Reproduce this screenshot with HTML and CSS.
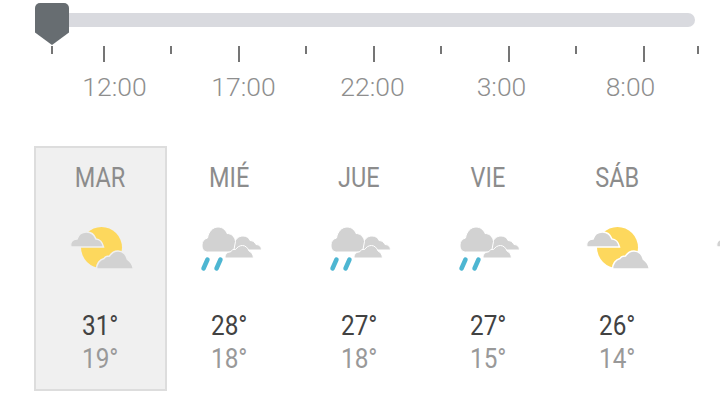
FILE: index.html
```html
<!DOCTYPE html>
<html lang="es">
<head>
  <meta charset="UTF-8">
  <title>Pronóstico</title>
  <link rel="stylesheet" href="styles.css">
</head>
<body>

  <svg class="defs" width="0" height="0">
    <symbol id="sun-cloud" viewBox="0 0 64 40">
      <circle cx="31" cy="18" r="20.5" fill="#fdd85d"/>
      <path class="gap" d="M.5 17.500C-1 13 2 9.500 6.500 9.500 8 4.500 12 2.500 16 2.500c4.500 0 8 3 9.500 7 3.500 0 6.500 3.500 7.500 8z"/>
      <path class="gap" d="M26 39.500c0-5 3-9.500 7.500-10.500 1-2 3.500-2.500 5.500-2.500 2-3 5-5 8.500-5 5 0 8.500 4 9.500 8.500 3 2 5 5 6 9.500z"/>
    </symbol>
    <symbol id="rain-cloud" viewBox="0 0 64 45">
      <path class="part" d="M33 23l2-7c1-4 4-7 8.500-7 3 0 6 1.500 7 4.500 3 0 5 2 6 4 3 0 5.500 2 5.500 5.500z"/>
      <path class="part" d="M8 25c-4 0-5.500-3.500-5.500-7 0-4 2.500-6 5.500-7C9 5 13 0 18.500 0c5 0 8 3.500 9 6.500 4.500 0 8 3.500 8.500 8L34 25z"/>
      <path class="part" d="M25.500 31c0-4 2-6 5.500-6 1-2 3-3 5-2.500 2-2.500 4-4 7-4 3 0 5.500 2.500 6.500 5.500 2.500 1 4 3.500 4.500 7z"/>
      <path class="drop" d="M8 32.500 4 41.500M21 32.500l-4 9"/>
    </symbol>
  </svg>

  <div class="slider">
    <div class="thumb"></div>
    <div class="track"></div>
  </div>

  <div class="ticks">
    <i></i><i class="major"></i><i></i><i class="major"></i><i></i><i class="major"></i><i></i><i class="major"></i><i></i><i class="major"></i><i></i>
  </div>

  <div class="hours">
    <span>12:00</span>
    <span>17:00</span>
    <span>22:00</span>
    <span>3:00</span>
    <span>8:00</span>
  </div>

  <div class="days">
    <div class="day selected">
      <div class="name"><span>MAR</span></div>
      <svg class="icon"><use href="#sun-cloud"/></svg>
      <div class="high"><span>31°</span></div>
      <div class="low"><span>19°</span></div>
    </div>
    <div class="day">
      <div class="name"><span>MIÉ</span></div>
      <svg class="icon"><use href="#rain-cloud"/></svg>
      <div class="high"><span>28°</span></div>
      <div class="low"><span>18°</span></div>
    </div>
    <div class="day">
      <div class="name"><span>JUE</span></div>
      <svg class="icon"><use href="#rain-cloud"/></svg>
      <div class="high"><span>27°</span></div>
      <div class="low"><span>18°</span></div>
    </div>
    <div class="day">
      <div class="name"><span>VIE</span></div>
      <svg class="icon"><use href="#rain-cloud"/></svg>
      <div class="high"><span>27°</span></div>
      <div class="low"><span>15°</span></div>
    </div>
    <div class="day">
      <div class="name"><span>SÁB</span></div>
      <svg class="icon"><use href="#sun-cloud"/></svg>
      <div class="high"><span>26°</span></div>
      <div class="low"><span>14°</span></div>
    </div>
    <div class="day">
      <svg class="icon next"><use href="#sun-cloud"/></svg>
    </div>
  </div>

</body>
</html>
```

FILE: styles.css
```css
* {
  margin: 0;
  padding: 0;
  box-sizing: border-box;
}

html, body {
  height: 405px;
  overflow: hidden;
}

body {
  font-family: Roboto, sans-serif;
  background: #fff;
}

.defs {
  display: block;
  height: 0;
}

/* Slider */
.slider {
  display: flex;
  align-items: flex-start;
  height: 46px;
  padding: 3px 25px 0 35px;
}

.thumb {
  flex: none;
  width: 34px;
  height: 42px;
  background: #676d71;
  border-radius: 5px 5px 0 0;
  clip-path: polygon(0 0, 100% 0, 100% 70%, 50% 100%, 0 70%);
}

.track {
  flex: 1;
  height: 14px;
  margin-top: 10px;
  background: #d9dadf;
  border-radius: 0 7px 7px 0;
}

.ticks {
  display: flex;
  gap: 65.5px;
  height: 16px;
  padding-left: 51px;
}

.ticks i {
  flex: none;
  width: 2px;
  height: 8px;
  background: #757575;
}

.ticks i:first-child {
  margin-right: -16px;
}

/* the first and last steps are shorter than the others */
.ticks i:last-child {
  margin-left: -13.5px;
}

.ticks i.major {
  height: 16px;
}

.hours {
  display: flex;
  padding-left: 50px;
  margin-top: 10px;
  height: 30px;
  line-height: 30px;
  font-size: 26.5px;
  font-weight: 300;
  color: #8e8e8e;
}

.hours span {
  flex: none;
  width: 129px;
  text-align: center;
}

/* Daily forecast */
.days {
  display: flex;
  align-items: flex-start;
  margin-top: 44px;
  padding-left: 34px;
  overflow: hidden;
}

.day {
  --bg: #fff;
  flex: none;
  width: 129.25px;
  height: 245px;
  padding-top: 14px;
  text-align: center;
  border: 2px solid transparent;
}

.day.selected {
  --bg: #f0f0f0;
  width: 133px;
  margin-right: -2px;
  background: var(--bg);
  border-color: #ddd;
}

.name, .high, .low {
  font-size: 27px;
}

.name span, .high span, .low span {
  display: inline-block;
  transform: scaleX(.87);
}

.high span, .low span {
  transform: scaleX(.9);
}

.name {
  height: 32px;
  line-height: 32px;
  color: #8c8c8c;
}

.icon {
  display: block;
  width: 64px;
  height: 45px;
  margin: 33px auto 0;
  transform: translateX(1.5px);
}

.icon.next {
  margin-top: 65px;
}

.high {
  margin-top: 38px;
  height: 33px;
  line-height: 33px;
  color: #424242;
}

.low {
  height: 33px;
  line-height: 33px;
  color: #999;
}

/* Icon parts, the cloud outline takes the colour of the cell behind it */
.gap {
  fill: #d2d2d2;
  stroke: var(--bg);
  stroke-width: 1.5;
}

.part {
  fill: #d2d2d2;
  stroke: #fff;
  stroke-width: 1;
}

.drop {
  fill: none;
  stroke: #4db6d2;
  stroke-width: 4.5;
  stroke-linecap: round;
}
```
